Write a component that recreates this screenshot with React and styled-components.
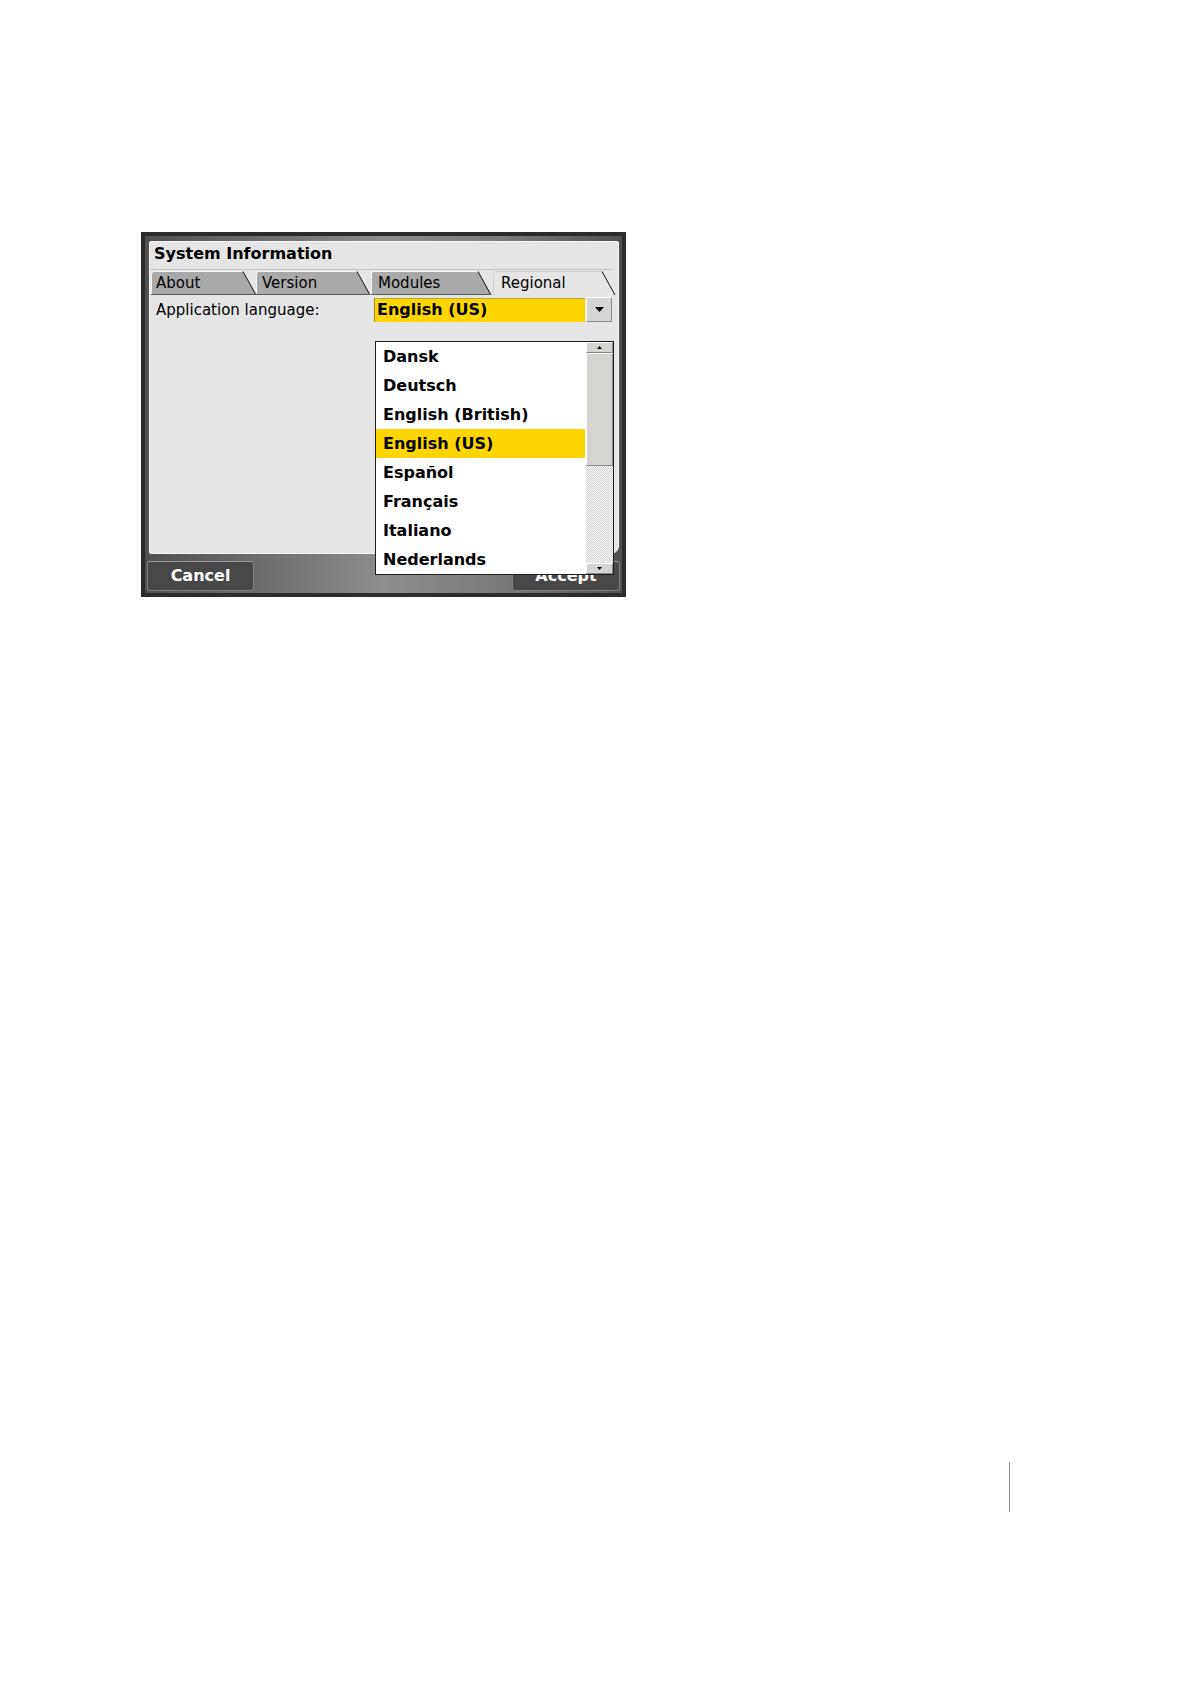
import React from "react";
import styled, { createGlobalStyle } from "styled-components";

const GlobalStyle = createGlobalStyle`
  html, body {
    margin: 0;
    padding: 0;
    background: #ffffff;
  }
  body {
    font-family: "DejaVu Sans", Verdana, sans-serif;
    color: #000;
  }
`;

const Page = styled.div`
  width: 1190px;
  height: 1683px;
  box-sizing: border-box;
  padding: 232px 0 0 141px;
  display: flex;
  flex-direction: column;
`;

const Frame = styled.div`
  width: 485px;
  height: 365px;
  box-sizing: border-box;
  border: 4px solid #2b2b2b;
  background: linear-gradient(
    90deg,
    #505050 0%,
    #6e6e6e 25%,
    #8d8d8d 50%,
    #7a7a7a 75%,
    #505050 100%
  );
  padding: 5px 3px 0 4px;
  display: flex;
  flex-direction: column;
`;

const Panel = styled.div`
  height: 313px;
  box-sizing: border-box;
  background: #e5e5e5;
  border: 1px solid #f7f7f7;
  border-radius: 2px 2px 8px 2px;
  display: flex;
  flex-direction: column;
`;

const TitleBar = styled.div`
  height: 27px;
  line-height: 23px;
  padding-left: 4px;
  margin-right: 5px;
  border-bottom: 1px solid #c2c2c2;
  font-weight: bold;
  font-size: 16px;
`;

const TabRow = styled.div`
  display: flex;
  height: 24px;
  margin: 1px 0 0 1px;
`;

const Tab = styled.div`
  position: relative;
  width: ${(p) => p.$width}px;
  height: 24px;
  flex: none;
`;

const TabSvg = styled.svg`
  position: absolute;
  left: 0;
  top: 0;
  display: block;
`;

const TabLabel = styled.span`
  position: relative;
  display: block;
  padding-left: ${(p) => p.$pad}px;
  font-size: 15px;
  line-height: 25px;
`;

const Content = styled.div`
  padding-top: 3px;
`;

const FieldRow = styled.div`
  display: flex;
  align-items: center;
`;

const FieldLabel = styled.div`
  width: 224px;
  padding-left: 6px;
  box-sizing: border-box;
  font-size: 15px;
  flex: none;
`;

const Dropdown = styled.div`
  position: relative;
  display: flex;
  gap: 1px;
`;

const DropValue = styled.div`
  width: 211px;
  height: 24px;
  box-sizing: border-box;
  background: #ffd500;
  border-left: 1px solid #9a8a3a;
  border-top: 1px solid #b9a440;
  padding-left: 2px;
  font-weight: bold;
  font-size: 16px;
  line-height: 22px;
`;

const DropButton = styled.div`
  width: 26px;
  height: 25px;
  margin-top: -1px;
  box-sizing: border-box;
  background: #d5d5d5;
  border: 1px solid;
  border-color: #ffffff #8a8a8a #8a8a8a #ffffff;
  display: flex;
  align-items: center;
  justify-content: center;
`;

const Popup = styled.div`
  position: absolute;
  left: 1px;
  top: 43px;
  z-index: 5;
  width: 239px;
  height: 234px;
  box-sizing: border-box;
  border: 1px solid #1e1e1e;
  background: #ffffff;
  display: flex;
`;

const List = styled.div`
  flex: 1;
  overflow: hidden;
`;

const Item = styled.div`
  height: 29px;
  line-height: 29px;
  padding-left: 7px;
  margin-right: 1px;
  font-weight: bold;
  font-size: 16px;
  white-space: nowrap;
  background: ${(p) => (p.$selected ? "#ffd500" : "transparent")};
`;

const ScrollBar = styled.div`
  width: 27px;
  display: flex;
  flex-direction: column;
`;

const ScrollButton = styled.div`
  height: 11px;
  box-sizing: border-box;
  background: #d6d4d0;
  border: 1px solid;
  border-color: #ffffff #8a8a8a #8a8a8a #ffffff;
  display: flex;
  align-items: center;
  justify-content: center;
`;

const Thumb = styled.div`
  height: 113px;
  box-sizing: border-box;
  background: #d6d4d0;
  border: 1px solid;
  border-color: #ffffff #8a8a8a #8a8a8a #ffffff;
`;

const Track = styled.div`
  flex: 1;
  background: repeating-conic-gradient(#ffffff 0 25%, #cfcdc9 0 50%) 0 0 / 2px
    2px;
`;

const BottomBar = styled.div`
  height: 39px;
  box-sizing: border-box;
  margin: 0 -2px;
  padding: 7px 1px 0 0;
  display: flex;
  justify-content: space-between;
  align-items: flex-start;
`;

const BarButton = styled.div`
  width: ${(p) => p.$width}px;
  height: 30px;
  box-sizing: border-box;
  background: #484848;
  border: 1px solid #808080;
  border-top-color: #9a9a9a;
  border-radius: 3px;
  color: #ffffff;
  font-weight: bold;
  font-size: 16px;
  line-height: 28px;
  text-align: center;
`;

const Rule = styled.div`
  width: 1px;
  height: 50px;
  margin: 865px 0 0 868px;
  background: #8e8e8e;
`;

const tabs = [
  { label: "About", width: 105, top: 92, pad: 5 },
  { label: "Version", width: 115, top: 101, pad: 6 },
  { label: "Modules", width: 122, top: 107, pad: 7 },
  { label: "Regional", width: 126, top: 109, pad: 8, active: true },
];

const languages = [
  "Dansk",
  "Deutsch",
  "English (British)",
  "English (US)",
  "Español",
  "Français",
  "Italiano",
  "Nederlands",
];

function TabShape({ width, top, active }) {
  const h = 24;
  const bottom = top + 13;
  return (
    <TabSvg width={width} height={h} viewBox={`0 0 ${width} ${h}`}>
      <path
        d={`M0.5 ${h} V3 Q0.5 0.5 3 0.5 H${top} L${bottom} ${h} Z`}
        fill={active ? "#e5e5e5" : "#a9a9a9"}
      />
      <path
        d={`M0.5 ${h} V3 Q0.5 0.5 3 0.5 H${top}`}
        fill="none"
        stroke={active ? "#cfcfcf" : "#f4f4f4"}
      />
      <path d={`M${top} 0.5 L${bottom} ${h}`} stroke="#111" />
      {!active && <path d={`M0 ${h - 0.5} H${bottom}`} stroke="#5a5a5a" />}
    </TabSvg>
  );
}

function Arrow({ up, w, h }) {
  return (
    <svg width={w} height={h} viewBox={`0 0 ${w} ${h}`}>
      <path
        d={up ? `M0 ${h} L${w / 2} 0 L${w} ${h} Z` : `M0 0 L${w} 0 L${w / 2} ${h} Z`}
        fill="#000"
      />
    </svg>
  );
}

export default function App() {
  return (
    <>
      <GlobalStyle />
      <Page>
        <Frame>
          <Panel>
            <TitleBar>System Information</TitleBar>
            <TabRow>
              {tabs.map((t) => (
                <Tab key={t.label} $width={t.width}>
                  <TabShape width={t.width} top={t.top} active={t.active} />
                  <TabLabel $pad={t.pad}>{t.label}</TabLabel>
                </Tab>
              ))}
            </TabRow>
            <Content>
              <FieldRow>
                <FieldLabel>Application language:</FieldLabel>
                <Dropdown>
                  <DropValue>English (US)</DropValue>
                  <DropButton>
                    <Arrow w={9} h={5} />
                  </DropButton>
                  <Popup>
                    <List>
                      {languages.map((l) => (
                        <Item key={l} $selected={l === "English (US)"}>
                          {l}
                        </Item>
                      ))}
                    </List>
                    <ScrollBar>
                      <ScrollButton>
                        <Arrow up w={5} h={3} />
                      </ScrollButton>
                      <Thumb />
                      <Track />
                      <ScrollButton>
                        <Arrow w={5} h={3} />
                      </ScrollButton>
                    </ScrollBar>
                  </Popup>
                </Dropdown>
              </FieldRow>
            </Content>
          </Panel>
          <BottomBar>
            <BarButton $width={107}>Cancel</BarButton>
            <BarButton $width={108}>Accept</BarButton>
          </BottomBar>
        </Frame>
        <Rule />
      </Page>
    </>
  );
}
